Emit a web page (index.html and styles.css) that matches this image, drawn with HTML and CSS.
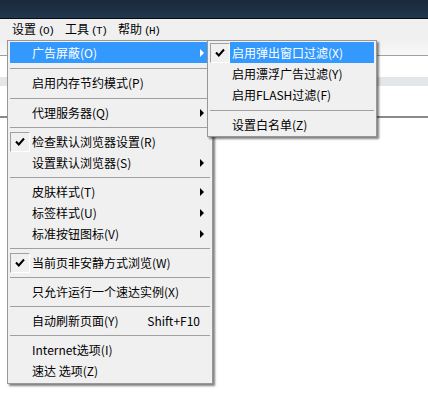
FILE: index.html
```html
<!DOCTYPE html>
<html lang="zh-CN">
<head>
<meta charset="utf-8">
<title>速达 菜单</title>
<link rel="stylesheet" href="styles.css">
</head>
<body>
<div class="app">
  <div class="titlebar"></div>
  <div class="menubar">
    <span class="mb-item">设置<span class="acc">(O)</span></span>
    <span class="mb-item">工具<span class="acc">(T)</span></span>
    <span class="mb-item">帮助<span class="acc">(H)</span></span>
  </div>
  <div class="toolbar"></div>
  <div class="addr"></div>
  <div class="band"></div>
  <div class="tabarea"></div>
  <div class="content"></div>

  <div class="menu main">
    <div class="item active"><span class="check"></span><span class="label">广告屏蔽(O)</span><span class="arrow"></span></div>
    <div class="sep wide"></div>
    <div class="item"><span class="check"></span><span class="label">启用内存节约模式(P)</span></div>
    <div class="sep wide"></div>
    <div class="item"><span class="check"></span><span class="label">代理服务器(Q)</span><span class="arrow"></span></div>
    <div class="sep"></div>
    <div class="item checked"><span class="check"><span class="box"><svg width="10" height="10" viewBox="0 0 10 10"><path d="M1 4.5 L3.8 7.5 L9 1.5" fill="none" stroke="#000" stroke-width="2"/></svg></span></span><span class="label">检查默认浏览器设置(R)</span></div>
    <div class="item"><span class="check"></span><span class="label">设置默认浏览器(S)</span><span class="arrow"></span></div>
    <div class="sep"></div>
    <div class="item"><span class="check"></span><span class="label">皮肤样式(T)</span><span class="arrow"></span></div>
    <div class="item"><span class="check"></span><span class="label">标签样式(U)</span><span class="arrow"></span></div>
    <div class="item"><span class="check"></span><span class="label">标准按钮图标(V)</span><span class="arrow"></span></div>
    <div class="sep"></div>
    <div class="item checked"><span class="check"><span class="box"><svg width="10" height="10" viewBox="0 0 10 10"><path d="M1 4.5 L3.8 7.5 L9 1.5" fill="none" stroke="#000" stroke-width="2"/></svg></span></span><span class="label">当前页非安静方式浏览(W)</span></div>
    <div class="sep"></div>
    <div class="item"><span class="check"></span><span class="label">只允许运行一个速达实例(X)</span></div>
    <div class="sep"></div>
    <div class="item"><span class="check"></span><span class="label">自动刷新页面(Y)</span><span class="shortcut">Shift+F10</span></div>
    <div class="sep"></div>
    <div class="item"><span class="check"></span><span class="label">Internet选项(I)</span></div>
    <div class="item"><span class="check"></span><span class="label">速达 选项(Z)</span></div>
  </div>

  <div class="menu sub">
    <div class="item active checked"><span class="check"><span class="box"><svg width="10" height="10" viewBox="0 0 10 10"><path d="M1 4.5 L3.8 7.5 L9 1.5" fill="none" stroke="#000" stroke-width="2"/></svg></span></span><span class="label">启用弹出窗口过滤(X)</span></div>
    <div class="item"><span class="check"></span><span class="label">启用漂浮广告过滤(Y)</span></div>
    <div class="item"><span class="check"></span><span class="label">启用FLASH过滤(F)</span></div>
    <div class="sep wide"></div>
    <div class="item"><span class="check"></span><span class="label">设置白名单(Z)</span></div>
  </div>
</div>
</body>
</html>
```

FILE: styles.css
```css
* { box-sizing: border-box; }

html, body {
  margin: 0;
  padding: 0;
  background: #ffffff;
}

.app {
  position: relative;
  width: 428px;
  height: 419px;
  overflow: hidden;
  font-family: "Noto Sans CJK SC", "Noto Sans", sans-serif;
  font-size: 12px;
  color: #000;
  display: flex;
  flex-direction: column;
}

.titlebar {
  height: 19px;
  flex: none;
  background: linear-gradient(#1a293c, #22364d);
  border-bottom: 1px solid #070b10;
}

.menubar {
  height: 21px;
  flex: none;
  background: #f0f0f0;
  display: flex;
  align-items: center;
  padding: 1px 0 0 12px;
}

.mb-item {
  width: 53px;
  flex: none;
  line-height: 20px;
  white-space: nowrap;
}

.mb-item .acc {
  font-family: "Liberation Mono", monospace;
  font-size: 11px;
  letter-spacing: -1.5px;
  margin-left: 2px;
}

.toolbar {
  height: 16px;
  flex: none;
  background: linear-gradient(#f0f0f0, #f8f8f8);
  border-bottom: 1px solid #a0a0a0;
}

.addr {
  height: 21px;
  flex: none;
  background: #ffffff;
}

.band {
  height: 9px;
  flex: none;
  background: #e4e7ea;
}

.tabarea {
  height: 32px;
  flex: none;
  background: #ffffff;
  border-bottom: 2px solid #8a8a8a;
}

.content {
  flex: 1;
  background: #ffffff;
}

/* popup menus lie over the page */
.menu {
  position: absolute;
  top: 40px;
  background: #f0f0f0;
  border: 1px solid #979797;
  box-shadow: 2px 2px 2px rgba(0, 0, 0, 0.5);
  padding: 1px 2px 2px;
}

.menu.main {
  left: 7px;
  width: 206px;
}

.menu.sub {
  left: 207px;
  width: 170px;
  padding-bottom: 1px;
}

.item {
  height: 21px;
  display: flex;
  align-items: center;
  white-space: nowrap;
}

.item .check {
  width: 20px;
  height: 21px;
  flex: none;
  display: flex;
  align-items: center;
  justify-content: center;
}

.item .box {
  width: 20px;
  height: 20px;
  display: flex;
  align-items: center;
  justify-content: center;
  border-style: solid;
  border-width: 1px;
  border-color: #a0a0a0 #ffffff #ffffff #a0a0a0;
}

.item .label {
  flex: 1;
  padding-left: 2px;
  line-height: 21px;
}

.item .shortcut {
  padding-right: 10px;
}

.item .arrow {
  width: 0;
  height: 0;
  margin-right: 6px;
  border-left: 4px solid #000;
  border-top: 4px solid transparent;
  border-bottom: 4px solid transparent;
}

.item.active {
  background: #3399ff;
  color: #ffffff;
}

.item.active .arrow {
  border-left-color: #ffffff;
}

.item.active.checked .check {
  background: #f0f0f0;
}

.sep {
  height: 8px;
  padding-top: 4px;
}

.sep::before {
  content: "";
  display: block;
  height: 1px;
  background: #a0a0a0;
}

.sep.wide {
  height: 9px;
  padding-top: 5px;
}
```
